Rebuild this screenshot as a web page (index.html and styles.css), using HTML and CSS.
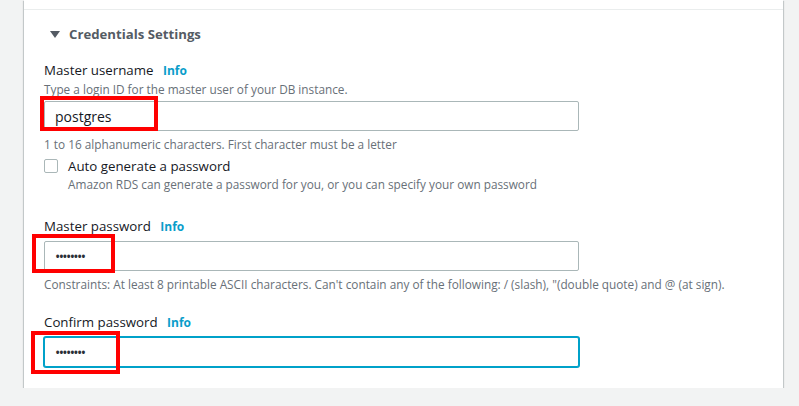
FILE: index.html
```html
<!DOCTYPE html>
<html lang="en">
<head>
    <meta charset="UTF-8">
    <meta name="viewport" content="width=device-width, initial-scale=1.0">
    <title>Credentials Settings</title>
    <link rel="stylesheet" href="styles.css">
</head>
<body>
    <div class="panel">
        <div class="panel-top"></div>

        <div class="section">
            <div class="section-title">
                <svg class="caret" width="10" height="7" viewBox="0 0 10 7"><polygon points="0,0 10,0 5,7" fill="#545b64"/></svg>
                <span>Credentials Settings</span>
            </div>

            <div class="field field-username">
                <div class="label">Master username <a class="info" href="#">Info</a></div>
                <div class="desc">Type a login ID for the master user of your DB instance.</div>
                <div class="control">
                    <input class="input" type="text" value="postgres">
                    <div class="mark mark-1"></div>
                </div>
                <div class="hint">1 to 16 alphanumeric characters. First character must be a letter</div>
            </div>

            <div class="check-row">
                <span class="checkbox"></span>
                <div>
                    <div class="check-label">Auto generate a password</div>
                    <div class="desc">Amazon RDS can generate a password for you, or you can specify your own password</div>
                </div>
            </div>

            <div class="field field-password">
                <div class="label">Master password <a class="info" href="#">Info</a></div>
                <div class="control">
                    <input class="input input-pass" type="password" value="12345678">
                    <div class="mark mark-2"></div>
                </div>
                <div class="hint">Constraints: At least 8 printable ASCII characters. Can't contain any of the following: / (slash), "(double quote) and @ (at sign).</div>
            </div>

            <div class="field field-confirm">
                <div class="label">Confirm password <a class="info" href="#">Info</a></div>
                <div class="control">
                    <input class="input input-pass focused" type="password" value="12345678">
                    <div class="mark mark-3"></div>
                </div>
            </div>
        </div>
    </div>
</body>
</html>
```

FILE: styles.css
```css
* {
    margin: 0;
    padding: 0;
    box-sizing: border-box;
}

body {
    background-color: #f2f3f3;
    font-family: 'Open Sans', 'Noto Sans', sans-serif;
    color: #16191f;
}

.panel {
    margin: 0 16px 0 24px;
    background: #fff;
    box-shadow: 0 1px 1px 0 rgba(0, 28, 36, 0.3), 1px 1px 1px 0 rgba(0, 28, 36, 0.15), -1px 1px 1px 0 rgba(0, 28, 36, 0.15);
}

.panel-top {
    height: 10px;
    border-bottom: 1px solid #eaeded;
}

.section {
    padding: 14px 20px 21px 20px;
}

.section-title {
    display: flex;
    align-items: center;
    height: 20px;
    padding-left: 6px;
    font-size: 13.2px;
    font-weight: 700;
    color: #545b64;
}

.caret {
    margin-right: 9px;
}

.label {
    font-size: 13.3px;
    line-height: 20px;
}

.info {
    margin-left: 6px;
    font-size: 12px;
    font-weight: 700;
    color: #0a9dca;
    text-decoration: none;
}

.desc, .hint {
    font-size: 11.8px;
    line-height: 16px;
    color: #687078;
}

.control {
    position: relative;
    width: 535px;
}

.input {
    display: block;
    width: 100%;
    height: 30px;
    padding: 0 10px;
    border: 1px solid #aab7b8;
    border-radius: 2px;
    font-family: inherit;
    font-size: 14px;
    color: #16191f;
    background: #fff;
    outline: none;
}

.input-pass {
    font-size: 14px;
    letter-spacing: -1.6px;
    color: #2a2f36;
}

.focused {
    border-color: #00a1c9;
    box-shadow: 0 0 0 1px #00a1c9;
}

.field-username {
    margin-top: 16px;
}

.field-username .control {
    margin-top: 4px;
}

.field .hint {
    margin-top: 5px;
}

.check-row {
    display: flex;
    margin-top: 4px;
}

.checkbox {
    width: 14px;
    height: 14px;
    margin: 3px 10px 0 0;
    border: 1px solid #aab7b8;
    border-radius: 2px;
    background: #fff;
}

.check-label {
    font-size: 13.3px;
    line-height: 20px;
}

.field-password {
    margin-top: 24px;
}

.field-password .control, .field-confirm .control {
    margin-top: 4px;
}

.field-confirm {
    margin-top: 20px;
}

/* red annotation boxes */
.mark {
    position: absolute;
    border: 4px solid #f00;
    pointer-events: none;
}

.mark-1 {
    left: -4px;
    top: -5px;
    width: 118px;
    height: 35px;
}

.mark-2 {
    left: -12px;
    top: -7px;
    width: 83px;
    height: 39px;
}

.mark-3 {
    left: -13px;
    top: -6px;
    width: 89px;
    height: 43px;
}
```
